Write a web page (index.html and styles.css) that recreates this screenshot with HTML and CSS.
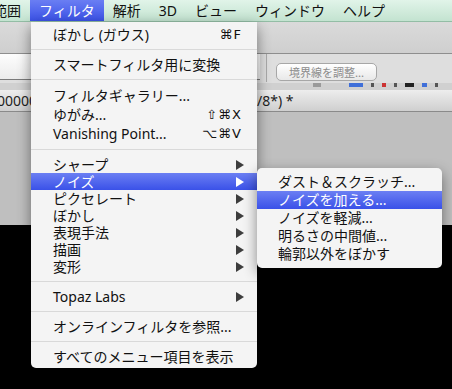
FILE: index.html
```html
<!DOCTYPE html>
<html lang="ja">
<head>
  <meta charset="UTF-8" />
  <title>フィルタ メニュー</title>
  <link rel="stylesheet" href="styles.css">
</head>
<body>
  <div class="app">
    <div class="menubar">
      <span class="mb-item first">範囲</span>
      <span class="mb-item active">フィルタ</span>
      <span class="mb-item">解析</span>
      <span class="mb-item">3D</span>
      <span class="mb-item">ビュー</span>
      <span class="mb-item">ウィンドウ</span>
      <span class="mb-item">ヘルプ</span>
    </div>
    <div class="toolbar"></div>
    <div class="optbar">
      <div class="field"></div>
      <div class="divider"></div>
      <button class="refine">境界線を調整...</button>
    </div>
    <div class="iconstrip">
      <span class="ic gray"></span>
      <span class="ic blue"></span>
      <span class="ic dark"></span>
      <span class="ic red"></span>
      <span class="ic dark"></span>
      <span class="ic black"></span>
      <span class="ic blue small"></span>
      <span class="ic dark"></span>
    </div>
    <div class="tabbar">
      <span class="title-left">00000</span>
      <span class="title-right">/8*) *</span>
    </div>
    <div class="canvas"></div>
  </div>

  <div class="menu">
    <div class="item">ぼかし (ガウス)<span class="key">⌘F</span></div>
    <div class="sep"></div>
    <div class="item">スマートフィルタ用に変換</div>
    <div class="sep"></div>
    <div class="item tall">フィルタギャラリー...</div>
    <div class="item tall">ゆがみ...<span class="key">⇧⌘X</span></div>
    <div class="item tall">Vanishing Point...<span class="key">⌥⌘V</span></div>
    <div class="sep"></div>
    <div class="item">シャープ<span class="arrow"></span></div>
    <div class="item hl">ノイズ<span class="arrow"></span></div>
    <div class="item">ピクセレート<span class="arrow"></span></div>
    <div class="item">ぼかし<span class="arrow"></span></div>
    <div class="item">表現手法<span class="arrow"></span></div>
    <div class="item">描画<span class="arrow"></span></div>
    <div class="item">変形<span class="arrow"></span></div>
    <div class="sep"></div>
    <div class="item">Topaz Labs<span class="arrow"></span></div>
    <div class="sep"></div>
    <div class="item">オンラインフィルタを参照...</div>
    <div class="sep"></div>
    <div class="item">すべてのメニュー項目を表示</div>
  </div>

  <div class="submenu">
    <div class="sub-item">ダスト＆スクラッチ...</div>
    <div class="sub-item hl">ノイズを加える...</div>
    <div class="sub-item">ノイズを軽減...</div>
    <div class="sub-item">明るさの中間値...</div>
    <div class="sub-item">輪郭以外をぼかす</div>
  </div>
</body>
</html>
```

FILE: styles.css
```css
body {
  margin: 0;
  width: 452px;
  height: 389px;
  overflow: hidden;
  position: relative;
  background: #000;
  font-family: "Noto Sans", "Noto Sans CJK JP", sans-serif;
  font-size: 14px;
  color: #111;
}

/* app window behind the menus */
.menubar {
  height: 22px;
  box-sizing: border-box;
  display: flex;
  background: linear-gradient(#e1f4e9, #c3e3d0);
  border-bottom: 1px solid #93bda5;
  line-height: 21px;
}

.mb-item {
  padding: 0 9px;
  white-space: nowrap;
}

.mb-item.first {
  margin-left: -16px;
}

.mb-item.active {
  background: linear-gradient(#6a7ef3, #3b52e7);
  color: #fff;
}

.toolbar {
  height: 31px;
  background: linear-gradient(#dadada, #cfcfcf);
  border-bottom: 1px solid #8e8e8e;
}

.optbar {
  height: 29px;
  display: flex;
  align-items: flex-start;
  background: #dedede;
}

.field {
  flex: 0 0 260px;
  height: 25px;
  background: linear-gradient(#fdfdfd, #ececec);
  border-bottom: 1px solid #7a7a7a;
}

.divider {
  width: 1px;
  height: 28px;
  margin-left: 6px;
  background: #a9a9a9;
}

.refine {
  margin: 9px 0 0 9px;
  width: 101px;
  height: 18px;
  padding: 0;
  border: 1px solid #a7a7a7;
  border-radius: 5px;
  background: linear-gradient(#fff, #e8e8e8);
  font-family: "Noto Sans CJK JP", sans-serif;
  font-size: 11px;
  line-height: 16px;
  color: #8c8c8c;
}

.iconstrip {
  height: 7px;
  display: flex;
  padding-left: 313px;
  background: #d0d0d0;
}

.ic {
  height: 4px;
  margin-right: 8px;
}

.ic.gray { width: 8px; background: #9a9a9a; margin-right: 28px; }
.ic.blue { width: 14px; background: #3f6fd9; }
.ic.dark { width: 3px; background: #555; }
.ic.red { width: 4px; background: #c33; }
.ic.black { width: 9px; background: #222; }
.ic.small { width: 5px; }

.tabbar {
  height: 22px;
  box-sizing: border-box;
  display: flex;
  background: linear-gradient(#ededed, #cfcfcf);
  border-bottom: 1px solid #8a8a8a;
  line-height: 21px;
  color: #222;
}

.title-left {
  margin-left: -3px;
}

.title-right {
  margin-left: auto;
  width: 195px;
}

.canvas {
  height: 113px;
  background: #bfbfbf;
}

/* filter menu */
.menu {
  position: absolute;
  left: 31px;
  top: 22px;
  width: 226px;
  box-sizing: border-box;
  padding: 4px 0 3px;
  background: #f4f4f4;
  border-radius: 0 0 5px 5px;
  box-shadow: 0 5px 14px rgba(0, 0, 0, 0.45);
}

.item {
  height: 17px;
  line-height: 17px;
  display: flex;
  align-items: center;
  padding: 0 13px 0 22px;
  white-space: nowrap;
}

.item.tall {
  height: 19px;
  line-height: 19px;
}

.item.hl,
.sub-item.hl {
  background: linear-gradient(#6b7ff3, #3a51e8);
  color: #fff;
}

.key {
  margin-left: auto;
  padding-right: 2px;
  font-family: "DejaVu Sans", sans-serif;
  font-size: 13px;
  letter-spacing: 1px;
}

.arrow {
  margin-left: auto;
  width: 0;
  height: 0;
  border-left: 8px solid #3d3d3d;
  border-top: 5px solid transparent;
  border-bottom: 5px solid transparent;
}

.item.hl .arrow {
  border-left-color: #fff;
}

.sep {
  height: 13px;
  display: flex;
  align-items: center;
}

.sep::after {
  content: "";
  flex: 1;
  height: 1px;
  background: #d9d9d9;
}

/* noise submenu */
.submenu {
  position: absolute;
  left: 257px;
  top: 168px;
  width: 185px;
  box-sizing: border-box;
  padding: 5px 0;
  background: #f4f4f4;
  border-radius: 5px;
  box-shadow: 0 5px 14px rgba(0, 0, 0, 0.45);
}

.sub-item {
  height: 18px;
  line-height: 18px;
  padding-left: 21px;
  white-space: nowrap;
}
```
